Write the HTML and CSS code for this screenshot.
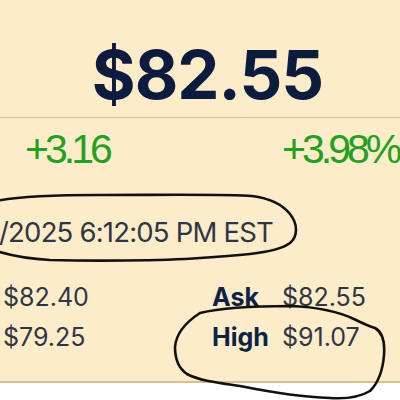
FILE: index.html
```html
<!DOCTYPE html>
<html lang="en">
<head>
<meta charset="utf-8">
<title>Quote</title>
<link rel="stylesheet" href="styles.css">
</head>
<body>
<div class="quote">
  <div class="price">$82.55</div>
  <div class="change">
    <span class="chg">+3.16</span>
    <span class="chg">+3.98%</span>
  </div>
  <div class="stamp">/2025 6:12:05 PM EST</div>
  <div class="stats">
    <span class="val">$82.40</span>
    <span class="lbl">Ask</span>
    <span class="val">$82.55</span>
    <span class="val">$79.25</span>
    <span class="lbl">High</span>
    <span class="val">$91.07</span>
  </div>
  <svg class="marks" width="400" height="400" viewBox="0 0 400 400" aria-hidden="true">
    <path d="M -4 201 C 10 198, 40 195, 100 195 C 160 195, 230 194, 252 196 C 268 198, 282 204, 290 214 C 298 224, 298 236, 290 243 C 282 249, 268 252, 250 254 C 230 256, 215 257, 200 258 C 160 261, 90 261, 50 260 C 30 259, 12 256, -4 251"/>
    <path d="M 200 313 C 220 308, 250 306, 290 306 C 320 307, 340 312, 356 320 C 362 323, 368 326, 375 328 C 382 332, 385 342, 384 355 C 383 368, 379 382, 370 391 C 360 397, 345 399, 330 398 C 300 397, 270 392, 240 386 C 220 383, 200 381, 187 374 C 178 368, 175 358, 175 347 C 176 335, 183 324, 200 313"/>
  </svg>
</div>
</body>
</html>
```
FILE: styles.css
```css
html, body {
  margin: 0;
  padding: 0;
  background: #ffffff;
}
body {
  width: 400px;
  height: 400px;
  overflow: hidden;
}
.quote {
  position: relative;
  background: #fdecc9;
  border-bottom: 2px solid #d9bf92;
  padding-bottom: 24px;
  white-space: nowrap;
}
.price {
  padding-top: 41px;
  padding-bottom: 9px;
  padding-left: 15px;
  text-align: center;
  font-family: Inter, "Liberation Sans", sans-serif;
  font-weight: 700;
  font-size: 67px;
  line-height: 67px;
  letter-spacing: -1px;
  color: #0b1c3e;
  border-bottom: 1px solid #d6bc90;
}
.change {
  display: grid;
  grid-template-columns: 257px auto;
  padding-left: 25px;
  padding-top: 7px;
  font-family: "Liberation Sans", Arial, sans-serif;
  font-size: 41px;
  line-height: 48px;
  letter-spacing: -4px;
  color: #22a022;
}
.stamp {
  margin-top: 42px;
  margin-left: -1px;
  font-family: Inter, "Liberation Sans", sans-serif;
  font-size: 27.5px;
  line-height: 34px;
  letter-spacing: -0.8px;
  color: #2d3646;
}
.stats {
  margin-top: 28px;
  display: grid;
  grid-template-columns: 209px 70px auto;
  padding-left: 3px;
  font-family: Inter, "Liberation Sans", sans-serif;
  font-size: 25px;
  line-height: 40px;
}
.val {
  color: #2d3646;
}
.lbl {
  color: #0d2247;
  font-weight: 700;
}
.marks {
  position: absolute;
  left: 0;
  top: 0;
  overflow: visible;
  pointer-events: none;
}
.marks path {
  fill: none;
  stroke: #111111;
  stroke-width: 2.6;
  stroke-linecap: round;
  stroke-linejoin: round;
}
```
